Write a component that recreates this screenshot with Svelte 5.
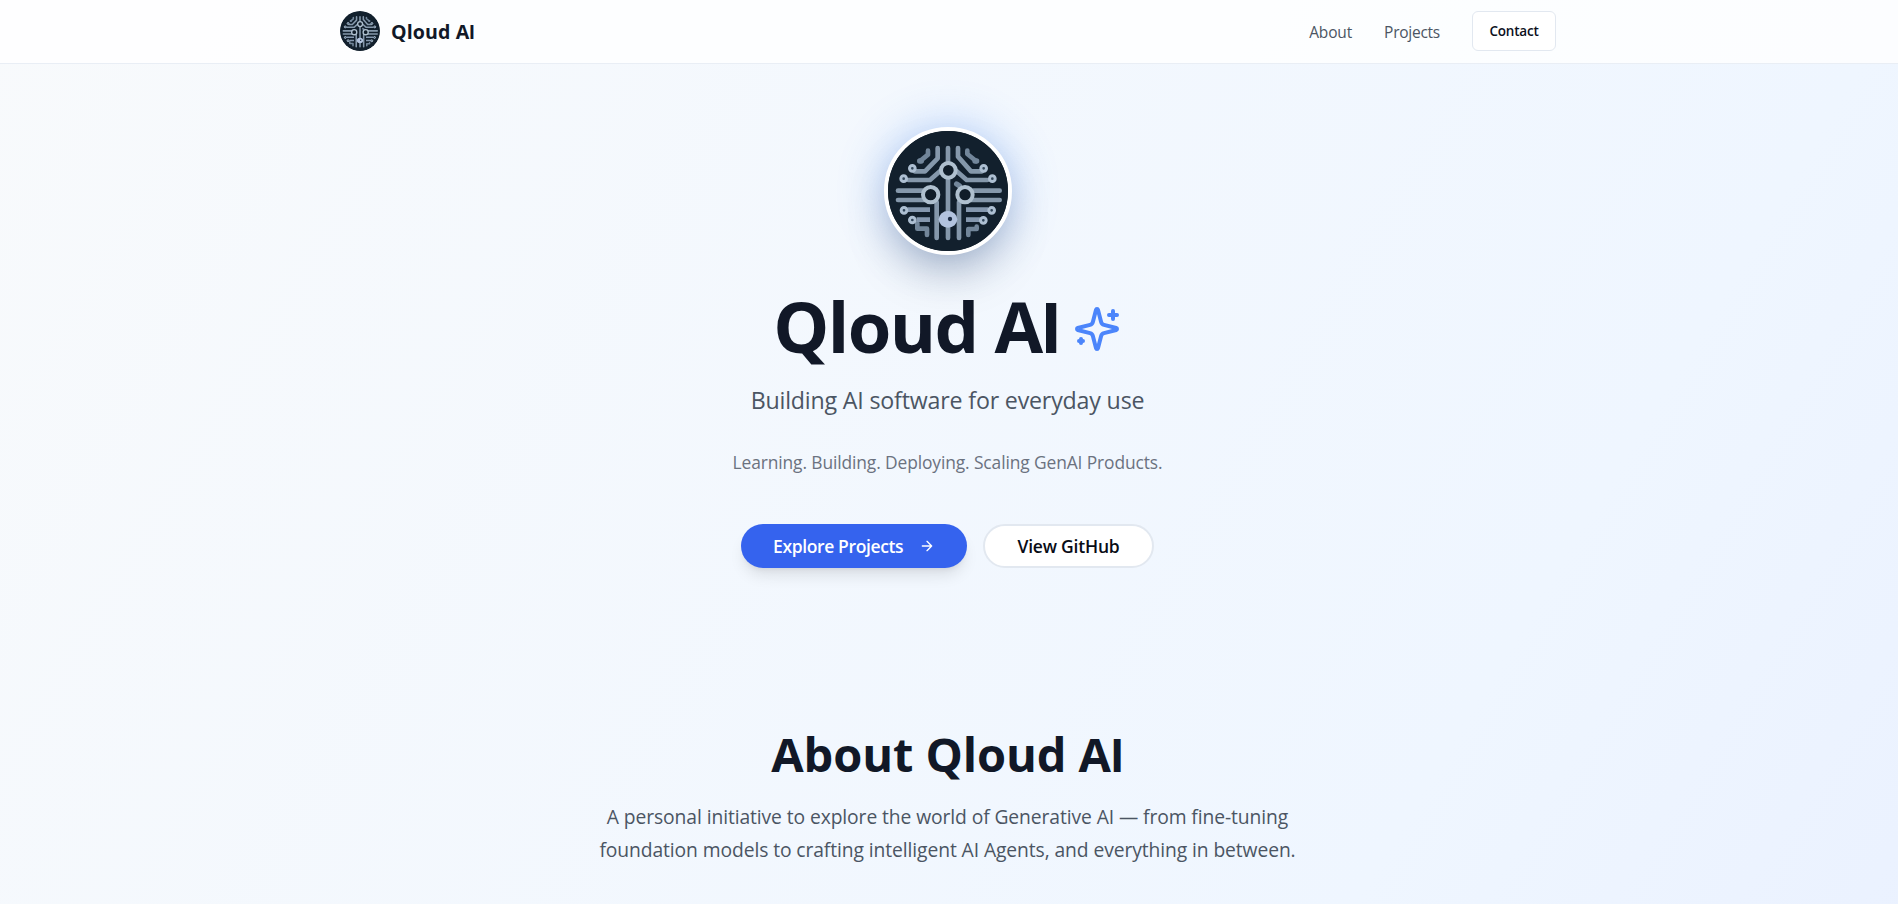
<script>
  const navLinks = [
    { label: 'About', tracking: '-0.15px' },
    { label: 'Projects', tracking: '-0.25px' }
  ];

  const rings = [
    [127, 175], [101, 206], [102, 301], [127, 330],
    [341, 175], [367, 206], [365, 301], [340, 331]
  ];

  const traces = [
    'M234 114V155', 'M234 206V384',
    'M203 114V145L165 184H134', 'M264 114V140L303 184H336',
    'M115 210H180L214 180', 'M256 180L290 210H352',
    'M84 242H158', 'M84 270H166', 'M310 242H389', 'M302 270H389',
    'M200 276V384', 'M267 276V384'
  ];

  const bars = ['M112 299H180', 'M140 329H180', 'M288 299H354', 'M288 329H332'];

  const faint = [
    'M174 122V134L152 152', 'M292 122V132L318 153',
    'M142 340V356H171V375', 'M295 375V357H320V350'
  ];
</script>

{#snippet emblem()}
  <svg class="emblem" viewBox="54 63 360 360" aria-hidden="true">
    <circle cx="234" cy="243" r="182" fill="#12202d" />
    <g fill="none" stroke-linejoin="round" stroke-width="14">
      <g stroke="#72869a" stroke-linecap="round">
        {#each faint as d}<path {d} />{/each}
        <path d="M149 153h5M315 153h5M260 222l8 5" stroke-width="16" />
      </g>
      <g stroke="#8598ab" stroke-linecap="round">
        {#each traces as d}<path {d} />{/each}
      </g>
      <g stroke="#8598af">
        {#each bars as d}<path {d} />{/each}
      </g>
    </g>
    {#each rings as [cx, cy]}
      <circle {cx} {cy} r="8.5" fill="#31465a" stroke="#adbfd2" stroke-width="9" />
    {/each}
    <g fill="#101d29" stroke="#afc0cf" stroke-width="12">
      <circle cx="235" cy="181" r="22" />
      <circle cx="182" cy="254" r="23" />
      <circle cx="285" cy="254" r="23" />
    </g>
    <ellipse cx="234" cy="328" rx="28" ry="25" fill="#b2c3de" />
    <circle cx="240" cy="327" r="6.5" fill="#1d2d45" />
  </svg>
{/snippet}

<div class="page">
  <header>
    <div class="bar">
      <div class="brand">
        <span class="mark">{@render emblem()}</span>
        <span class="name">Qloud A<span class="stem">I</span></span>
      </div>
      <nav>
        {#each navLinks as link}
          <a href="#{link.label.toLowerCase()}" style="letter-spacing: {link.tracking}">{link.label}</a>
        {/each}
        <button class="contact">Contact</button>
      </nav>
    </div>
  </header>

  <main>
    <section class="hero">
      <div class="logo">
        <div class="disc">{@render emblem()}</div>
      </div>
      <h1>
        <span>Qloud A<span class="stem">I</span></span>
        <svg width="48" height="48" viewBox="0 0 24 24" fill="none" stroke="#4b85fb" stroke-width="2" stroke-linecap="round" stroke-linejoin="round" aria-hidden="true">
          <path d="M9.937 15.5A2 2 0 0 0 8.5 14.063l-6.135-1.582a.5.5 0 0 1 0-.962L8.5 9.936A2 2 0 0 0 9.937 8.5l1.582-6.135a.5.5 0 0 1 .963 0L14.063 8.5A2 2 0 0 0 15.5 9.937l6.135 1.581a.5.5 0 0 1 0 .964L15.5 14.063a2 2 0 0 0-1.437 1.437l-1.582 6.135a.5.5 0 0 1-.963 0z" />
          <path d="M20 3v4M22 5h-4M4 17v2M5 18H3" />
        </svg>
      </h1>
      <p class="tagline">Building AI software for everyday use</p>
      <p class="motto">Learning. Building. Deploying. Scaling GenAI Products.</p>
      <div class="actions">
        <button class="primary">
          <span>Explore Projects</span>
          <svg width="16" height="16" viewBox="0 0 24 24" fill="none" stroke="currentColor" stroke-width="2" stroke-linecap="round" stroke-linejoin="round" aria-hidden="true">
            <path d="M5 12h14M12 5l7 7-7 7" />
          </svg>
        </button>
        <button class="secondary">View GitHub</button>
      </div>
    </section>

    <section class="about" id="about">
      <h2>About Qloud A<span class="stem">I</span></h2>
      <p>
        A personal initiative to explore the world of Generative AI — from fine-tuning<br />
        foundation models to crafting intelligent AI Agents, and everything in between.
      </p>
    </section>
  </main>
</div>

<style>
  :global(body) {
    margin: 0;
    overflow: hidden;
  }

  .page {
    height: 904px;
    overflow: hidden;
    box-sizing: border-box;
    padding-right: 2px;
    font-family: 'Open Sans', 'Noto Sans', sans-serif;
    color: #111827;
    background: linear-gradient(to bottom right, #f8fafc, #eff6ff, #e0e7ff) 0 0 / 1898px 3150px no-repeat;
  }

  h1, h2, p { margin: 0; }

  button {
    font-family: inherit;
    box-sizing: border-box;
    padding: 0;
  }

  .stem {
    font-family: Inter, sans-serif;
    font-size: 0.975em;
    letter-spacing: 0;
  }

  header {
    height: 64px;
    box-sizing: border-box;
    margin-right: -2px;
    padding-right: 2px;
    background: rgba(255, 255, 255, 0.8);
    border-bottom: 1px solid #e9eef5;
  }

  .bar {
    width: 1216px;
    height: 62px;
    margin: 0 auto;
    display: flex;
    align-items: center;
    justify-content: space-between;
  }

  .brand {
    display: flex;
    align-items: center;
    gap: 11px;
  }

  .mark {
    width: 40px;
    height: 40px;
    border-radius: 50%;
    overflow: hidden;
  }

  .emblem {
    display: block;
    width: 100%;
    height: 100%;
  }

  .name {
    padding-top: 2px;
    font-size: 19.6px;
    font-weight: 700;
    line-height: 28px;
    letter-spacing: 0.1px;
  }

  nav {
    display: flex;
    align-items: center;
    gap: 32px;
  }

  nav a {
    padding-top: 1px;
    font-size: 15.5px;
    line-height: 24px;
    color: #4b5563;
    text-decoration: none;
  }

  .contact {
    width: 84px;
    height: 40px;
    border: 1px solid #e2e8f0;
    border-radius: 6px;
    background: #fff;
    font-size: 13.5px;
    font-weight: 600;
    letter-spacing: -0.22px;
    color: #0b101c;
  }

  .hero {
    display: flex;
    flex-direction: column;
    align-items: center;
    padding-top: 63px;
  }

  .logo {
    position: relative;
    width: 128px;
    height: 128px;
  }

  .logo::before {
    content: '';
    position: absolute;
    inset: 0;
    border-radius: 50%;
    background: #3b82f6;
    opacity: 0.36;
    filter: blur(24px);
  }

  .disc {
    position: relative;
    box-sizing: border-box;
    width: 128px;
    height: 128px;
    border: 4px solid #fff;
    border-radius: 50%;
    overflow: hidden;
    background: #12202d;
    box-shadow: 0 25px 50px -12px rgba(0, 0, 0, 0.25);
  }

  h1 {
    display: flex;
    align-items: center;
    gap: 12px;
    margin-top: 35px;
    padding-right: 2px;
    font-size: 70.5px;
    line-height: 72px;
    font-weight: 700;
    letter-spacing: -1.55px;
  }

  h1 svg { margin-top: 4px; }

  .tagline {
    margin-top: 20px;
    padding-right: 1px;
    font-size: 23.2px;
    line-height: 32px;
    letter-spacing: -0.18px;
    color: #4b5563;
  }

  .motto {
    margin-top: 32px;
    padding-right: 1px;
    font-size: 17.4px;
    line-height: 28px;
    letter-spacing: -0.115px;
    color: #6b7280;
  }

  .actions {
    display: flex;
    gap: 16px;
    margin-top: 48px;
    padding-right: 1px;
  }

  .actions button {
    height: 44px;
    border-radius: 22px;
    font-size: 17.5px;
    font-weight: 600;
  }

  .primary {
    width: 226px;
    padding: 0 32px;
    display: flex;
    align-items: center;
    justify-content: space-between;
    border: 0;
    background: #3563ee;
    color: #fff;
    letter-spacing: -0.37px;
    box-shadow: 0 10px 15px -3px rgba(0, 0, 0, 0.1), 0 4px 6px -4px rgba(0, 0, 0, 0.1);
  }

  .secondary {
    width: 171px;
    border: 2px solid #e2e8f0;
    background: #fff;
    color: #080c16;
    letter-spacing: -0.22px;
  }

  .about {
    margin-top: 162px;
    padding-right: 1px;
    text-align: center;
  }

  h2 {
    font-size: 47px;
    line-height: 48px;
    font-weight: 700;
    letter-spacing: -0.1px;
  }

  .about p {
    margin-top: 20px;
    font-size: 19.3px;
    line-height: 33px;
    letter-spacing: -0.1px;
    color: #4b5563;
  }
</style>
